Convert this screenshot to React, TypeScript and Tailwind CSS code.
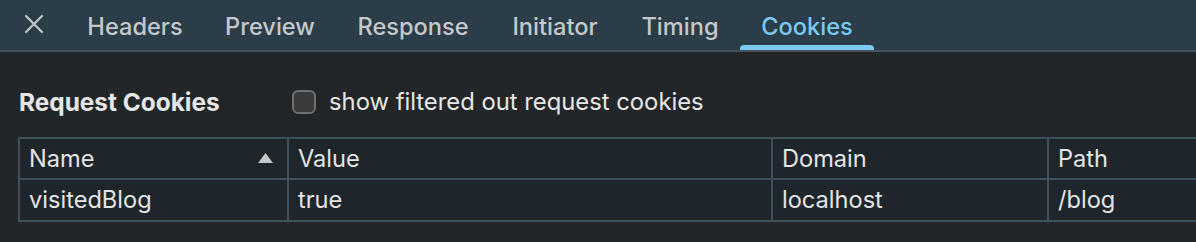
import React from "react";

const tabs: { label: string; w: string }[] = [
  { label: "Headers", w: "w-[138px]" },
  { label: "Preview", w: "w-[132px]" },
  { label: "Response", w: "w-[154px]" },
  { label: "Initiator", w: "w-[130px]" },
  { label: "Timing", w: "w-[120px]" },
  { label: "Cookies", w: "w-[134px]" },
];

export default function App() {
  return (
    <div
      className="w-[1196px] h-[242px] overflow-hidden bg-[#222629] text-[#e3e3e3]"
      style={{ fontFamily: "Inter, 'Liberation Sans', sans-serif" }}
    >
      <div className="flex h-[52px] items-stretch border-b-2 border-[#45555f] bg-[#2a3d48]">
        <div className="flex w-[66px] items-center pl-[24px] pb-[2px]">
          <svg width="20" height="20" viewBox="0 0 20 20" fill="none">
            <path d="M2 2 L18 18 M18 2 L2 18" stroke="#c3c7ca" strokeWidth="2.2" strokeLinecap="round" />
          </svg>
        </div>
        {tabs.map(({ label, w }) => {
          const active = label === "Cookies";
          return (
            <div key={label} className={"relative flex items-center justify-center pt-[3px] " + w}>
              <span
                className={
                  "text-[23.6px] font-medium " + (active ? "text-[#7ccaf3]" : "text-[#c5c8cb]")
                }
              >
                {label}
              </span>
              {active && (
                <div className="absolute bottom-0 left-0 right-0 h-[5px] rounded-t-[4px] bg-[#7ccaf3]" />
              )}
            </div>
          );
        })}
      </div>
      <div className="flex h-[85px] items-center pl-[19px] pt-[15px]">
        <span className="w-[273px] text-[24.4px] font-bold text-[#e6e6e6]">Request Cookies</span>
        <div className="flex items-center gap-[13px]">
          <div className="h-[24px] w-[24px] rounded-[6px] border-2 border-[#6d6f71] bg-[#3b3b3b]" />
          <span className="text-[23.8px] text-[#e6e6e6]">show filtered out request cookies</span>
        </div>
      </div>
      <div className="pl-[18px]">
        <table className="w-[1229px] table-fixed border-collapse text-[23.6px] text-[#e3e4e5]">
          <colgroup>
            <col className="w-[269px]" />
            <col className="w-[484px]" />
            <col className="w-[276px]" />
            <col className="w-[200px]" />
          </colgroup>
          <thead>
            <tr className="h-[41px] bg-[#1f262b]">
              <th className="border-2 border-[#3e505b] px-[9px] text-left font-normal">
                <div className="flex items-center justify-between">
                  <span>Name</span>
                  <svg width="15" height="10" viewBox="0 0 15 10" className="mr-[5px]">
                    <polygon points="7.5,0 15,10 0,10" fill="#c4c7c8" />
                  </svg>
                </div>
              </th>
              <th className="border-2 border-[#3e505b] px-[9px] text-left font-normal">Value</th>
              <th className="border-2 border-[#3e505b] px-[9px] text-left font-normal">Domain</th>
              <th className="border-2 border-[#3e505b] px-[9px] text-left font-normal">Path</th>
            </tr>
          </thead>
          <tbody>
            <tr className="h-[42px] bg-[#1f262b]">
              <td className="border-2 border-[#3e505b] px-[9px]">visitedBlog</td>
              <td className="border-2 border-[#3e505b] px-[9px]">true</td>
              <td className="border-2 border-[#3e505b] px-[9px]">localhost</td>
              <td className="border-2 border-[#3e505b] px-[9px]">/blog</td>
            </tr>
          </tbody>
        </table>
      </div>
    </div>
  );
}
